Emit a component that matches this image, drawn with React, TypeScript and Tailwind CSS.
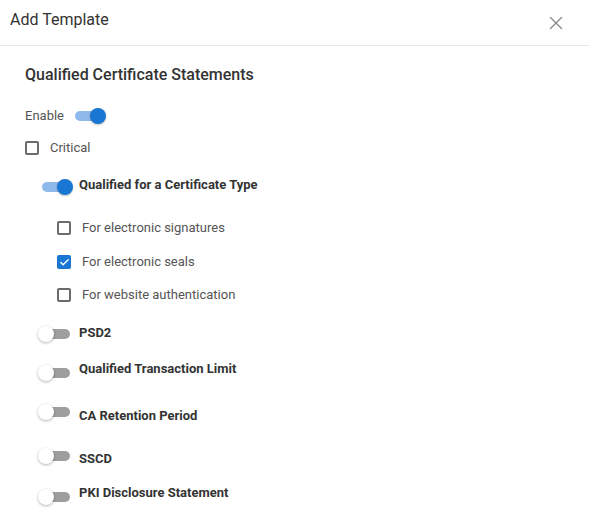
import { X, Check } from "lucide-react";

interface ToggleProps {
  on: boolean;
  shift?: string;
}

function Toggle({ on, shift = "" }: ToggleProps) {
  return (
    <span
      className={`relative inline-block w-[28px] h-[10px] rounded-full shrink-0 ${
        on ? "bg-[#8fb9ea]" : "bg-[#9e9e9e]"
      } ${shift}`}
    >
      <span
        className={`absolute top-[-3px] w-[16px] h-[16px] rounded-full ${
          on
            ? "right-[-3px] bg-[#1976d2] shadow-[0_1px_2px_rgba(0,0,0,0.25)]"
            : "left-[-4px] bg-white shadow-[0_1px_3px_rgba(0,0,0,0.3)]"
        }`}
      />
    </span>
  );
}

interface BoxProps {
  checked: boolean;
}

function Box({ checked }: BoxProps) {
  return checked ? (
    <span className="w-[14px] h-[14px] rounded-[2px] bg-[#1976d2] grid place-items-center shrink-0">
      <Check size={11} strokeWidth={3} className="text-white" />
    </span>
  ) : (
    <span className="w-[14px] h-[14px] rounded-[2px] border-2 border-[#6b6b6b] shrink-0" />
  );
}

interface ToggleRowProps {
  label: string;
  on?: boolean;
  rowClass: string;
  toggleShift?: string;
  textShift?: string;
}

function ToggleRow({ label, on = false, rowClass, toggleShift = "", textShift = "" }: ToggleRowProps) {
  return (
    <div className={`flex items-center h-[20px] pl-[17px] gap-[9px] ${rowClass}`}>
      <Toggle on={on} shift={toggleShift} />
      <span className={`text-[13px] font-bold text-[#333] ${textShift}`}>{label}</span>
    </div>
  );
}

interface CheckRowProps {
  label: string;
  checked?: boolean;
  rowClass: string;
}

function CheckRow({ label, checked = false, rowClass }: CheckRowProps) {
  return (
    <div className={`flex items-center h-[20px] pl-[32px] gap-[11px] ${rowClass}`}>
      <Box checked={checked} />
      <span className="text-[13px] text-[#555]">{label}</span>
    </div>
  );
}

export default function App() {
  return (
    <div
      className="w-[589px] h-[528px] bg-white overflow-hidden"
      style={{ fontFamily: "Roboto, 'Liberation Sans', sans-serif" }}
    >
      <div className="h-[46px] border-b border-[#e6e6e6] flex items-start justify-between pl-[10px] pr-[22px] pt-[10px]">
        <span className="text-[16px] leading-[20px] text-[#333]">Add Template</span>
        <X size={22} strokeWidth={1.5} className="text-[#8a8a8a] mt-[2px]" />
      </div>

      <div className="pl-[25px] pt-[19px] flex flex-col">
        <h2 className="h-[20px] leading-[20px] text-[16px] font-medium text-[#333]">
          Qualified Certificate Statements
        </h2>

        <div className="flex items-center h-[20px] mt-[21px] gap-[11px]">
          <span className="text-[13px] text-[#555]">Enable</span>
          <Toggle on />
        </div>

        <div className="flex items-center h-[20px] mt-[12px] gap-[11px]">
          <Box checked={false} />
          <span className="text-[13px] text-[#555]">Critical</span>
        </div>

        <ToggleRow
          label="Qualified for a Certificate Type"
          on
          rowClass="mt-[18px]"
          toggleShift="translate-y-[1px]"
          textShift="-translate-y-[1px]"
        />

        <CheckRow label="For electronic signatures" rowClass="mt-[22px]" />
        <CheckRow label="For electronic seals" checked rowClass="mt-[14px]" />
        <CheckRow label="For website authentication" rowClass="mt-[13px]" />

        <ToggleRow label="PSD2" rowClass="mt-[19px]" textShift="-translate-y-[1px]" />
        <ToggleRow
          label="Qualified Transaction Limit"
          rowClass="mt-[17px]"
          toggleShift="translate-y-[2px]"
          textShift="-translate-y-[2px]"
        />
        <ToggleRow
          label="CA Retention Period"
          rowClass="mt-[23px]"
          toggleShift="-translate-y-[2px]"
          textShift="translate-y-[2px]"
        />
        <ToggleRow
          label="SSCD"
          rowClass="mt-[23px]"
          toggleShift="-translate-y-[1px]"
          textShift="translate-y-[2px]"
        />
        <ToggleRow
          label="PKI Disclosure Statement"
          rowClass="mt-[18px]"
          toggleShift="translate-y-[2px]"
          textShift="-translate-y-[2px]"
        />
      </div>
    </div>
  );
}
